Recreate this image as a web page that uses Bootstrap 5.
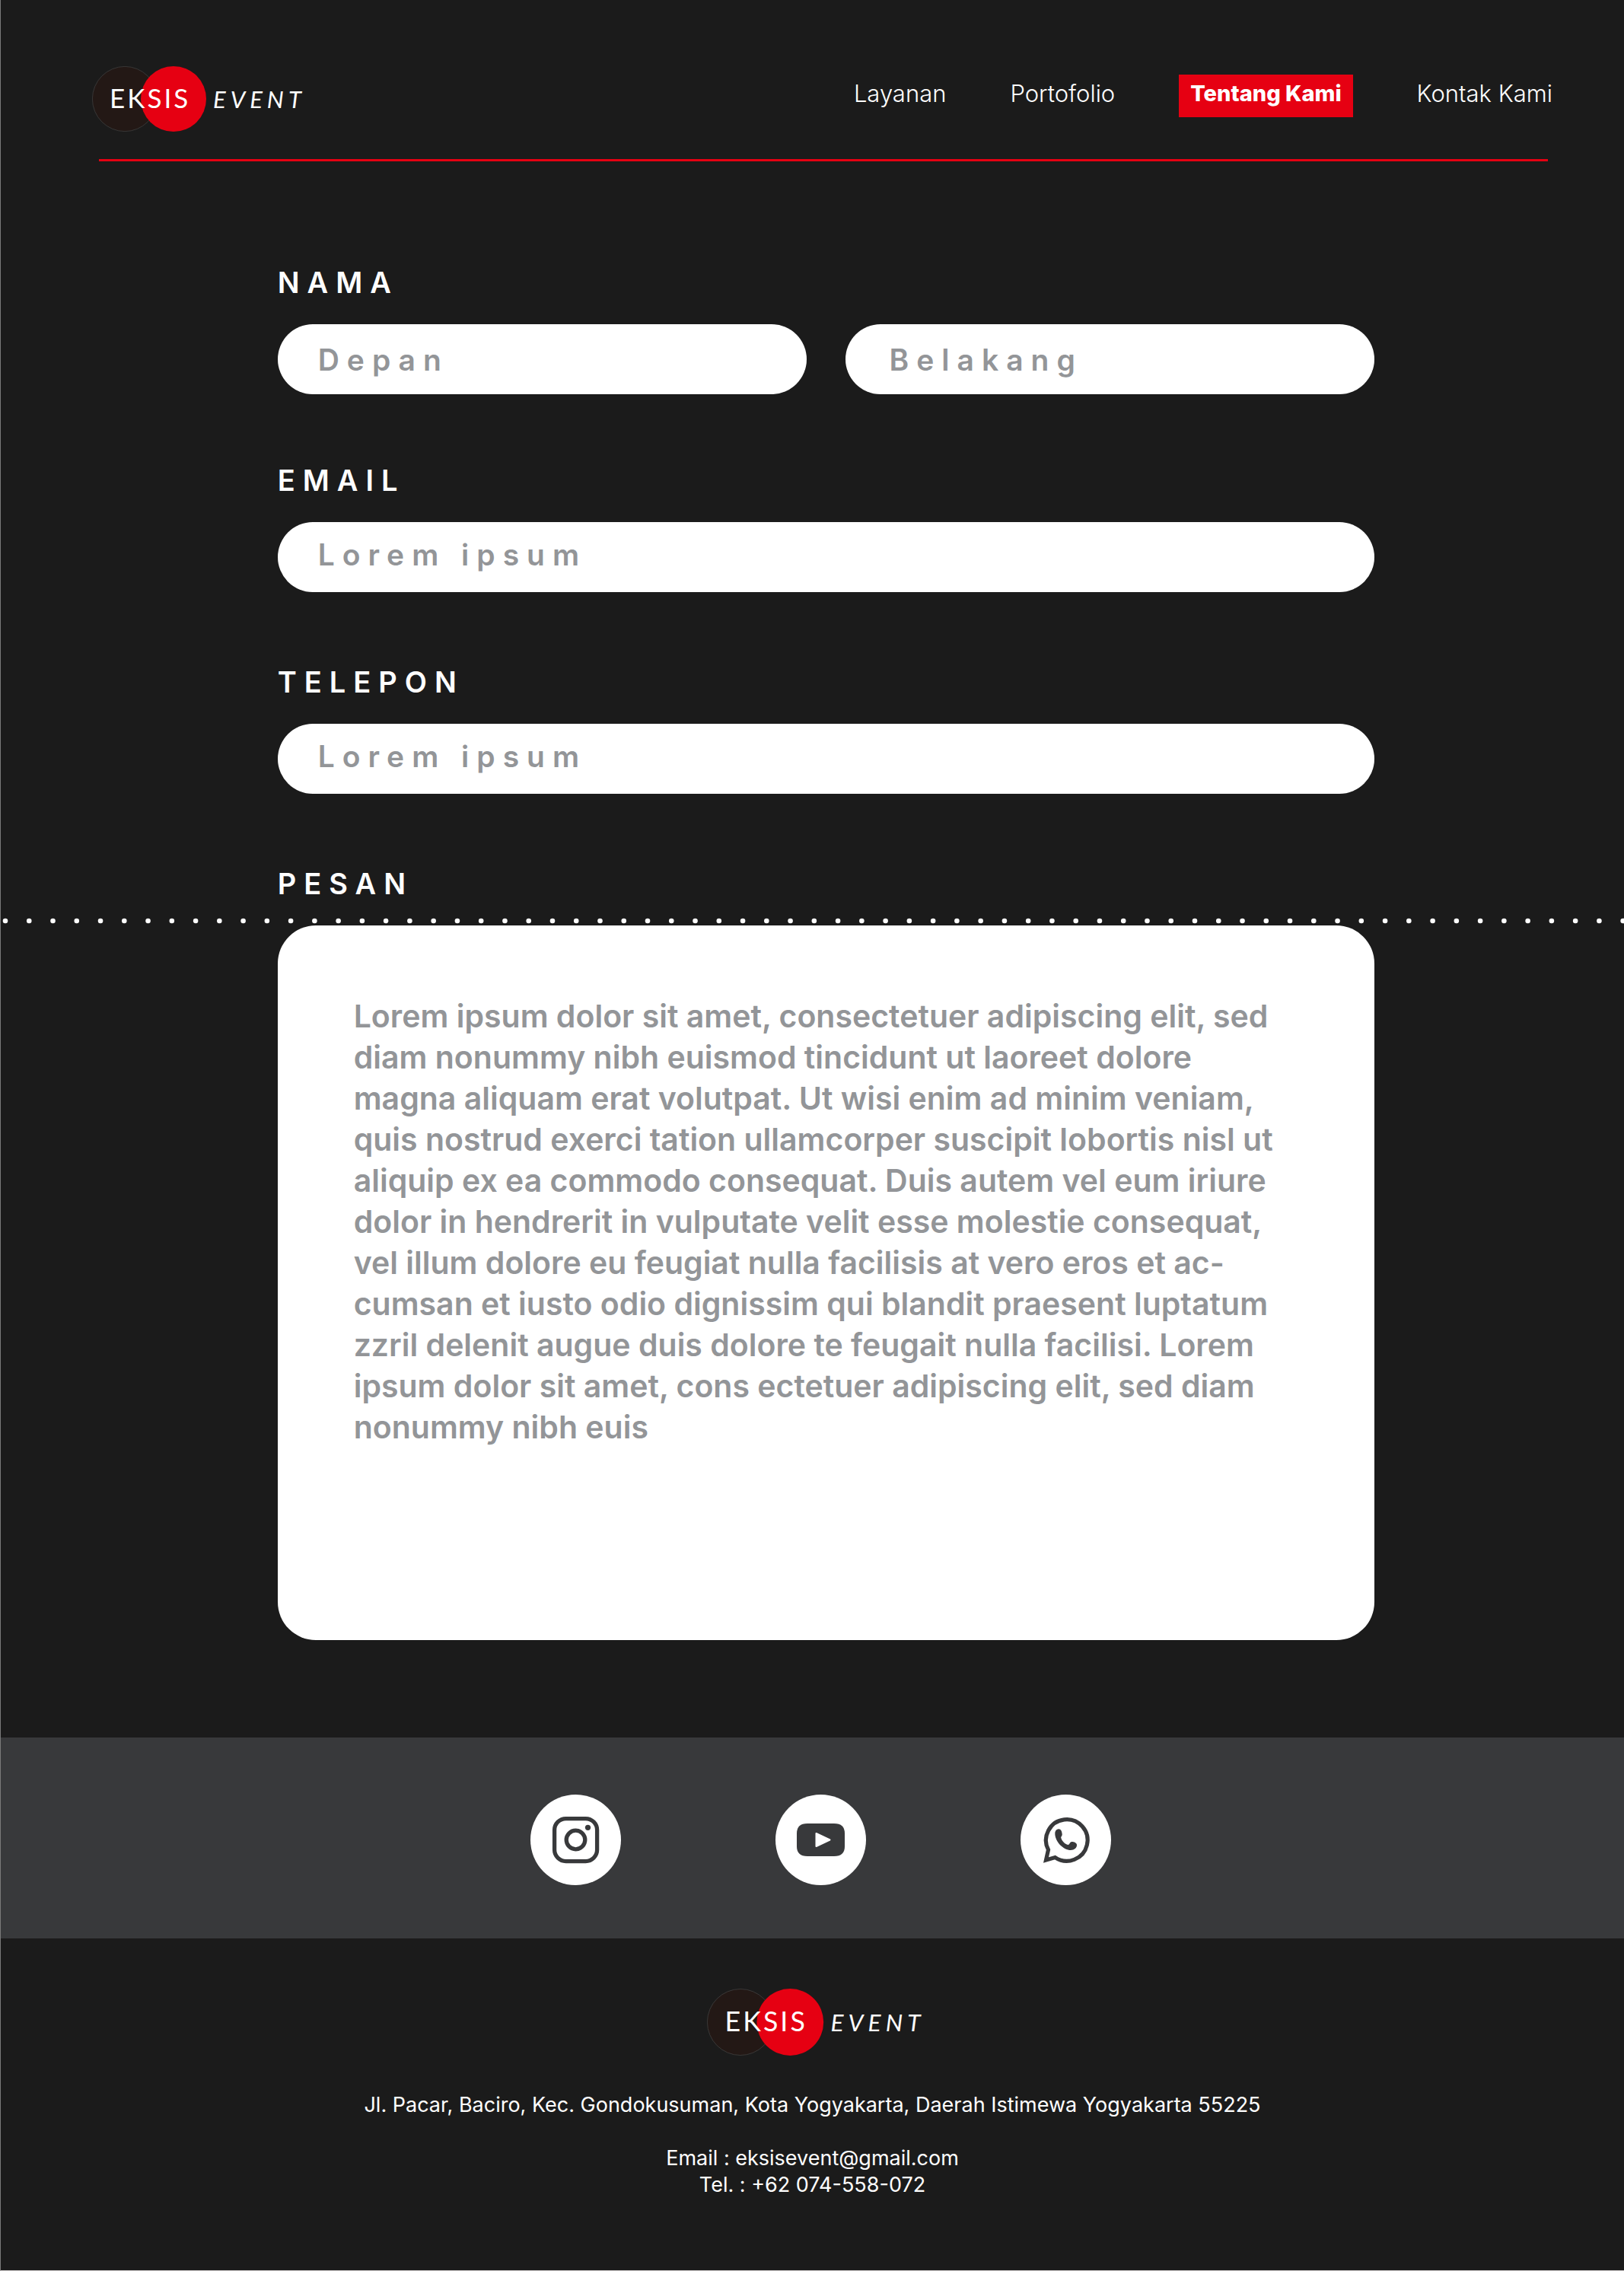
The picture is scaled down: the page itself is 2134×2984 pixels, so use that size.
<!DOCTYPE html>
<html lang="id">
<head>
<meta charset="utf-8">
<meta name="viewport" content="width=device-width, initial-scale=1">
<title>Eksis Event</title>
<link href="https://cdn.jsdelivr.net/npm/bootstrap@5.3.0/dist/css/bootstrap.min.css" rel="stylesheet">
<style>
  body { background: #1b1b1b; color: #fff; font-family: Inter, "Open Sans", sans-serif; border-left: 1px solid #7a7a7a; border-bottom: 1px solid #d0cccc; min-height: 100vh; }
  .site-header { padding: 87px 94px 36px 120px; }
  .site-nav { gap: 84px; margin-top: 11px; }
  .site-nav .nav-link { color: #fff; font-size: 31px; line-height: 36px; font-weight: 300; padding: 7px 0 13px; }
  .site-nav .nav-link.active { background: #e60012; font-size: 29px; font-weight: 800; padding-left: 15px; padding-right: 15px; }
  .red-rule { height: 3px; background: #e60012; margin: 0 100px 0 129px; }
  .contact-form { padding-top: 135px; }
  .form-inset { padding-left: 17.05%; padding-right: 15.4%; }
  .field-group { margin-bottom: 94px; }
  .field-group:first-child { margin-bottom: 89px; }
  .field-title { display: block; font-size: 38px; line-height: 48px; font-weight: 600; letter-spacing: 10px; margin-bottom: 31px; }
  .name-pair { grid-template-columns: 1fr 1fr; gap: 51px; }
  .pill { height: 92px; border: 0; border-radius: 46px; font-size: 39px; line-height: 48px; font-weight: 600; letter-spacing: 10px; padding: 18px 53px 26px; background: #fff; color: #939598; }
  .name-pair .pill { padding-top: 22px; padding-bottom: 22px; }
  .name-pair .pill + .pill { padding-left: 58px; }
  .pill::placeholder { color: #939598; opacity: 1; }
  .dots { display: block; width: 100%; height: 8px; margin: 21px 0 2px; }
  .message-box { height: 939px; border: 0; border-radius: 50px; resize: none; overflow: hidden; padding: 92px 50px 60px 100px; font-size: 41px; line-height: 54px; font-weight: 600; background: #fff; color: #939598; }
  .social-band { background: #38393b; padding: 75px 0 70px 22px; gap: 203px; margin-top: 128px; }
  .social-band svg { display: block; width: 119px; height: 119px; }
  .site-footer { padding: 66px 0 95px; font-size: 27px; line-height: 35px; }
  .footer-mark { padding-left: 10px; margin-bottom: 47px; }
</style>
</head>
<body>
<svg class="d-none" aria-hidden="true">
  <symbol id="brand" viewBox="0 0 282 86">
    <circle cx="43" cy="43" r="42.6" fill="#231815" stroke="#444" stroke-width=".7"/>
    <circle cx="107" cy="43" r="43" fill="#e60012"/>
    <g fill="#fff" font-family="Lato, sans-serif">
      <text x="23" y="55" font-size="35" letter-spacing="3">EKSIS</text>
      <text x="159" y="55" font-size="31" font-style="italic" letter-spacing="6">EVENT</text>
    </g>
  </symbol>
</svg>

<header>
  <div class="site-header d-flex justify-content-between align-items-start">
    <a href="#" aria-label="Eksis Event"><svg class="d-block" width="282" height="86"><use href="#brand"/></svg></a>
    <nav class="nav site-nav">
      <a class="nav-link" href="#">Layanan</a>
      <a class="nav-link" href="#">Portofolio</a>
      <a class="nav-link active" href="#" aria-current="page">Tentang Kami</a>
      <a class="nav-link" href="#">Kontak Kami</a>
    </nav>
  </div>
  <div class="red-rule"></div>
</header>

<main>
  <form class="contact-form">
    <div class="form-inset">
      <div class="field-group">
        <label class="field-title" for="depan">NAMA</label>
        <div class="name-pair d-grid">
          <input class="form-control pill" id="depan" type="text" placeholder="Depan">
          <input class="form-control pill" id="belakang" type="text" placeholder="Belakang" aria-label="Nama belakang">
        </div>
      </div>
      <div class="field-group">
        <label class="field-title" for="email">EMAIL</label>
        <input class="form-control pill" id="email" type="email" placeholder="Lorem ipsum">
      </div>
      <div class="field-group">
        <label class="field-title" for="telepon">TELEPON</label>
        <input class="form-control pill" id="telepon" type="tel" placeholder="Lorem ipsum">
      </div>
      <label class="field-title mb-0" for="pesan">PESAN</label>
    </div>
    <svg class="dots" aria-hidden="true"><line x1="6" y1="4" x2="100%" y2="4" stroke="#fff" stroke-width="6.6" stroke-linecap="round" stroke-dasharray="0 31.26"/></svg>
    <div class="form-inset">
      <textarea class="form-control message-box" id="pesan">Lorem ipsum dolor sit amet, consectetuer adipiscing elit, sed
diam nonummy nibh euismod tincidunt ut laoreet dolore
magna aliquam erat volutpat. Ut wisi enim ad minim veniam,
quis nostrud exerci tation ullamcorper suscipit lobortis nisl ut
aliquip ex ea commodo consequat. Duis autem vel eum iriure
dolor in hendrerit in vulputate velit esse molestie consequat,
vel illum dolore eu feugiat nulla facilisis at vero eros et ac-
cumsan et iusto odio dignissim qui blandit praesent luptatum
zzril delenit augue duis dolore te feugait nulla facilisi. Lorem
ipsum dolor sit amet, cons ectetuer adipiscing elit, sed diam
nonummy nibh euis</textarea>
    </div>
  </form>
  <div class="social-band d-flex justify-content-center">
    <a href="#" aria-label="Instagram"><svg viewBox="0 0 119 119"><circle cx="59.5" cy="59.5" r="59.5" fill="#fff"/><g fill="none" stroke="#38393b" stroke-width="5.3"><rect x="31.6" y="31.6" width="56" height="56" rx="15"/><circle cx="59.5" cy="59.5" r="12.3"/></g><circle cx="75.5" cy="43.3" r="3.6" fill="#38393b"/></svg></a>
    <a href="#" aria-label="YouTube"><svg viewBox="0 0 119 119"><circle cx="59.5" cy="59.5" r="59.5" fill="#fff"/><path fill="#38393b" d="M42 38h35q14 0 14 13v17q0 13-14 13H42q-14 0-14-13V51q0-13 14-13z"/><path fill="#fff" stroke="#fff" stroke-width="2" stroke-linejoin="round" d="M53.5 51v17L71.5 59.5z"/></svg></a>
    <a href="#" aria-label="WhatsApp"><svg viewBox="0 0 119 119"><circle cx="59.5" cy="59.5" r="59.5" fill="#fff"/><path fill="none" stroke="#38393b" stroke-width="5.2" d="M36.5 72.5A27.3 27.3 0 1 1 45.5 82.6L33.5 86z"/><path fill="#38393b" d="M49.7 45.3C46.5 46 45 48.5 45.3 52 46 62.5 56.5 73 66 73c4.5 0 8.3-3 8-7-.2-2.500-3.500-4-6.700-4-2.800 0-2.500 4-5 4-4-1-7.500-4.500-9-9-.5-1.800 1.700-2.500 1.400-5-.3-3.700-1.700-7-5-6.700z"/></svg></a>
  </div>
</main>

<footer class="site-footer text-center">
  <div class="footer-mark"><svg class="d-block mx-auto" width="288" height="88" role="img" aria-label="Eksis Event"><use href="#brand"/></svg></div>
  <p class="m-0">Jl. Pacar, Baciro, Kec. Gondokusuman, Kota Yogyakarta, Daerah Istimewa Yogyakarta 55225</p>
  <br>
  <p class="m-0">Email : eksisevent@gmail.com</p>
  <p class="m-0">Tel. : +62 074-558-072</p>
</footer>
<script src="https://cdn.jsdelivr.net/npm/bootstrap@5.3.0/dist/js/bootstrap.bundle.min.js"></script>
</body>
</html>
